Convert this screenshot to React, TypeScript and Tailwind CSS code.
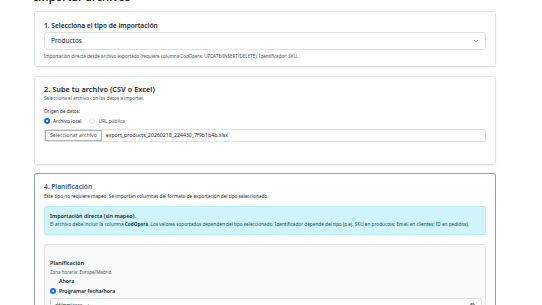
import { ChevronDown, Calendar } from "lucide-react";

function Radio({ checked, label }: { checked?: boolean; label: string }) {
  return (
    <label className="flex items-center gap-[3px]">
      {checked ? (
        <span className="grid h-[6px] w-[6px] place-items-center rounded-full bg-[#0d6efd]">
          <span className="h-[2px] w-[2px] rounded-full bg-white" />
        </span>
      ) : (
        <span className="h-[6px] w-[6px] rounded-full border border-[#dee2e6] bg-white" />
      )}
      <span>{label}</span>
    </label>
  );
}

export default function App() {
  return (
    <div className="h-[305px] overflow-hidden bg-white font-['Noto_Sans',sans-serif] text-[#212529]">
      <div className="ml-[34px] w-[462px]">
        <h1 className="-mt-[9px] h-[11px] text-[11px] font-semibold leading-[11px]">Importar archivos</h1>

        <section className="mt-[9px] rounded-[3px] border border-[#dee2e6] px-[9px] pb-[7px] pt-[9px] shadow-[0_1px_2px_rgba(0,0,0,0.06)]">
          <p className="text-[6.6px] font-semibold leading-[10px]">1. Selecciona el tipo de importación</p>
          <div className="mt-[1px] flex h-[18px] items-center justify-between rounded-[3px] border border-[#dee2e6] pl-[6px] pr-[6px] text-[6.5px]">
            <span>Productos</span>
            <ChevronDown className="h-[6px] w-[6px] text-[#495057]" strokeWidth={2.5} />
          </div>
          <p className="mt-[3px] text-[4.5px] leading-[6px] text-[#495057]">
            Importación directa desde archivo exportado (requiere columna CodOpera: UPDATE/INSERT/DELETE). Identificador: SKU.
          </p>
        </section>

        <section className="mt-[9px] h-[89px] rounded-[3px] border border-[#dee2e6] px-[9px] pt-[7px] shadow-[0_1px_2px_rgba(0,0,0,0.06)]">
          <p className="text-[7.4px] font-semibold leading-[11px]">2. Sube tu archivo (CSV o Excel)</p>
          <p className="text-[4.65px] leading-[7px] text-[#495057]">Selecciona el archivo con los datos a importar.</p>
          <p className="mt-[5px] text-[4.6px] leading-[8px]">Origen de datos:</p>
          <div className="mt-[2px] flex gap-[8px] text-[4.8px] leading-[8px]">
            <Radio checked label="Archivo local" />
            <span className="text-[#495057]"><Radio label="URL pública" /></span>
          </div>
          <div className="mt-[4px] flex h-[13px] items-stretch rounded-[2px] border border-[#dee2e6] text-[5.2px]">
            <span className="flex items-center border border-[#adb5bd] bg-white px-[4px] text-[#495057]">Seleccionar archivo</span>
            <span className="flex items-center pl-[4px]">export_products_20260218_224430_7f9b1b4b.xlsx</span>
          </div>
        </section>

        <section className="mt-[8px] h-[140px] rounded-[3px] border border-[#8a9bb8] px-[9px] pt-[8px]">
          <p className="text-[6.6px] font-semibold leading-[10px] text-[#2a5aa8]">4. Planificación</p>
          <p className="mt-[1px] text-[4.7px] leading-[7px]">
            Este tipo no requiere mapeo. Se importan columnas del formato de exportación del tipo seleccionado.
          </p>
          <div className="mt-[6px] h-[29px] rounded-[2px] border border-[#b6effb] bg-[#cff4fc] px-[5px] pt-[6px] text-[#055160]">
            <p className="text-[5.4px] font-semibold leading-[7px] text-[#212529]">Importación directa (sin mapeo).</p>
            <p className="text-[4.7px] leading-[8px]">
              El archivo debe incluir la columna <b>CodOpera</b>. Los valores soportados dependen del tipo seleccionado. Identificador depende del tipo (p.ej. SKU en productos; Email en clientes; ID en pedidos).
            </p>
          </div>
          <div className="mt-[9px] h-[70px] rounded-[3px] border border-[#dee2e6] bg-[#f8f9fa] px-[5px] pt-[14px]">
            <p className="text-[5.5px] font-semibold leading-[8px]">Planificación</p>
            <p className="mt-[1px] text-[4.5px] leading-[8px] text-[#495057]">Zona horaria: Europe/Madrid</p>
            <div className="text-[5.2px] font-semibold leading-[10px]">
              <div className="pl-[9px]">Ahora</div>
              <Radio checked label="Programar fecha/hora" />
            </div>
            <div className="mt-[2px] flex h-[14px] w-[432px] items-center justify-between rounded-[2px] border border-[#dee2e6] bg-white pl-[4px] pr-[6px] text-[4.5px]">
              <span>dd/mm/aaaa, --:--</span>
              <Calendar className="h-[5px] w-[5px]" />
            </div>
          </div>
        </section>
      </div>
    </div>
  );
}
